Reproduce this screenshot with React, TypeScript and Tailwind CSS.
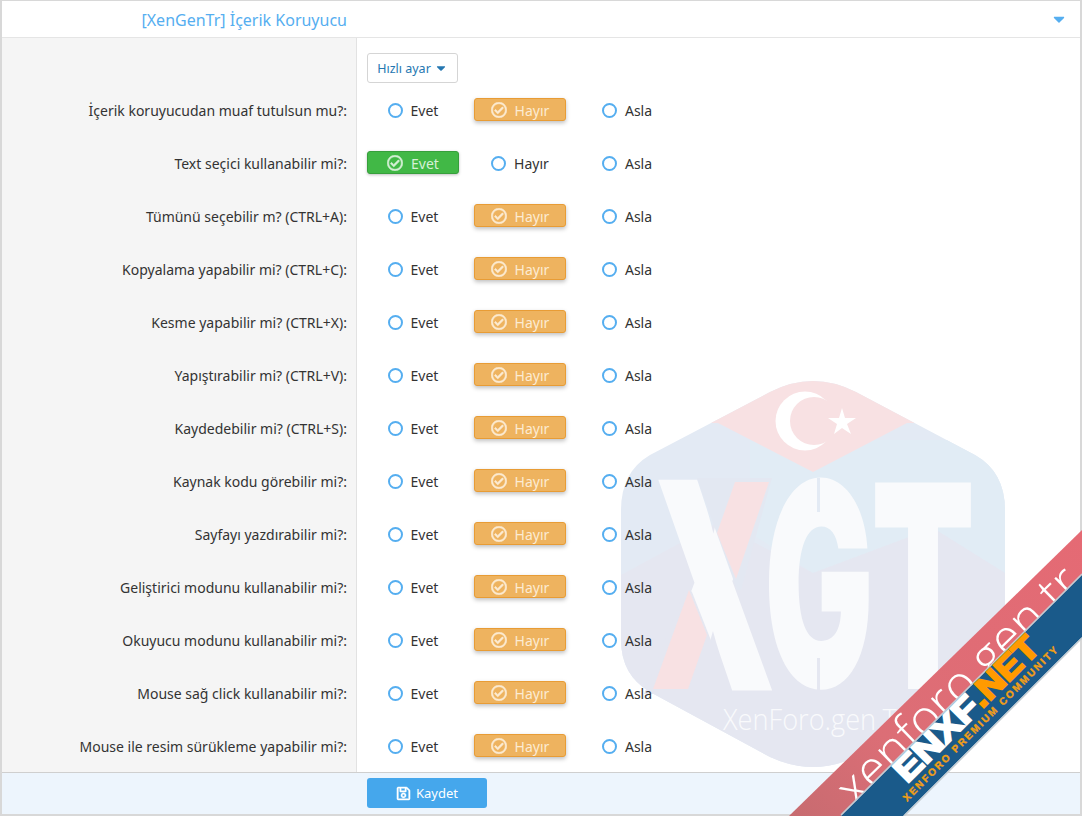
import React from "react";
import { FaCaretDown, FaRegCheckCircle, FaRegSave } from "react-icons/fa";

const rows: [string, "evet" | "hayir"][] = [
  ["İçerik koruyucudan muaf tutulsun mu?:", "hayir"],
  ["Text seçici kullanabilir mi?:", "evet"],
  ["Tümünü seçebilir m? (CTRL+A):", "hayir"],
  ["Kopyalama yapabilir mi? (CTRL+C):", "hayir"],
  ["Kesme yapabilir mi? (CTRL+X):", "hayir"],
  ["Yapıştırabilir mi? (CTRL+V):", "hayir"],
  ["Kaydedebilir mi? (CTRL+S):", "hayir"],
  ["Kaynak kodu görebilir mi?:", "hayir"],
  ["Sayfayı yazdırabilir mi?:", "hayir"],
  ["Geliştirici modunu kullanabilir mi?:", "hayir"],
  ["Okuyucu modunu kullanabilir mi?:", "hayir"],
  ["Mouse sağ click kullanabilir mi?:", "hayir"],
  ["Mouse ile resim sürükleme yapabilir mi?:", "hayir"],
];

function Option({ label, active }: { label: string; active?: "green" | "orange" }) {
  if (active) {
    return (
      <div
        className={
          active === "green"
            ? "flex h-[23px] w-[92px] items-center justify-center gap-[8px] rounded-[3px] border border-[#379f3c] bg-[#41b846] text-[#d5f0d6] shadow-[0_1px_3px_rgba(0,0,0,0.25)]"
            : "flex h-[23px] w-[92px] items-center justify-center gap-[8px] rounded-[3px] border border-[#e89c35] bg-[#eeb35f] text-[#fcebd2] shadow-[0_2px_4px_rgba(0,0,0,0.25)]"
        }
      >
        <FaRegCheckCircle className="h-[16px] w-[16px]" stroke="currentColor" strokeWidth={18} />
        <span className="pt-[2px]">{label}</span>
      </div>
    );
  }
  return (
    <div className="flex h-[23px] w-[92px] items-center justify-center gap-[8px] text-[#333333]">
      <span className="h-[15px] w-[15px] translate-y-[1px] rounded-full border-2 border-[#55aef0] bg-white/30" />
      <span className="pt-[2px]">{label}</span>
    </div>
  );
}

function Backdrop() {
  return (
    <svg className="pointer-events-none absolute left-0 top-0" width="1082" height="816" viewBox="0 0 1082 816">
      <defs>
        <clipPath id="hex">
          <path d="M770 392Q813 370 856 392L975 455Q1005 472 1005 510L1005 640Q1005 675 975 692L856 757Q813 777 770 757L650 692Q621 675 621 640L621 510Q621 472 650 455Z" />
        </clipPath>
      </defs>
      <g clipPath="url(#hex)">
        <rect x="600" y="360" width="430" height="430" fill="#e3eaf4" />
        <polygon points="750,533 813,573 933,528 1005,573 1005,440 750,440" fill="#e1ecf5" />
        <polygon points="621,575 717,523 813,573 933,528 1005,573 1005,790 621,790" fill="#e5e7f1" />
        <polygon points="813,340 940,423 907,423 813,472 718,423 690,423" fill="#f8e1e3" />
      </g>
      <circle cx="805" cy="421" r="29.5" fill="#ffffff" />
      <circle cx="814" cy="421" r="24" fill="#f8e1e3" />
      <polygon
        points="842,408 845,418 856,418 847,424 851,434 842,428 834,434 837,424 828,418 839,418"
        fill="#ffffff"
      />
      <g fill="#f9fafc" fontFamily="Inter, sans-serif" fontWeight="900">
        <text x="654" y="687" fontSize="280" textLength="118" lengthAdjust="spacingAndGlyphs" stroke="#f9fafc" strokeWidth="7">X</text>
        <text x="764" y="687" fontSize="284" textLength="110" lengthAdjust="spacingAndGlyphs">G</text>
        <text x="871" y="689" fontSize="284" textLength="104" lengthAdjust="spacingAndGlyphs">T</text>
      </g>
      <rect x="817" y="478" width="3" height="34" fill="#e3eaf4" />
      <rect x="817" y="658" width="3" height="34" fill="#e5e7f1" />
      <polygon points="697,478 772,478 741,590 737,590" fill="#e3e8f2" />
      <polygon points="692,592 732,694 644,694 686,586" fill="#e5e7f1" />
      <polygon points="735,482 769,482 736,579 717,533" fill="#f8e1e3" />
      <polygon points="689,590 707,635 688,689 653,689" fill="#f8e1e3" />
      <text x="723" y="730" fontSize="29" textLength="190" lengthAdjust="spacingAndGlyphs" fill="#f9fafc" fontFamily="'Open Sans', sans-serif" fontWeight="300">
        XenForo.gen.TR
      </text>
    </svg>
  );
}

function Ribbon() {
  return (
    <svg className="pointer-events-none absolute left-0 top-0" width="1082" height="816" viewBox="0 0 1082 816">
      <defs>
        <linearGradient id="red" x1="1082" y1="530" x2="790" y2="816" gradientUnits="userSpaceOnUse">
          <stop offset="0" stopColor="#e56a74" />
          <stop offset="0.7" stopColor="#dc6e76" />
          <stop offset="1" stopColor="#c76b70" />
        </linearGradient>
      </defs>
      <polygon points="1082,530 1082,575 841,816 789,816" fill="url(#red)" />
      <text
        transform="translate(856 809) rotate(-44.3)"
        fontSize="50"
        textLength="318"
        lengthAdjust="spacingAndGlyphs"
        fill="#ffffff"
        fontFamily="'Open Sans', sans-serif"
        fontWeight="300"
      >
        xenforo.gen.tr
      </text>
      <polygon points="1082,575 1082,637 903,816 841,816" fill="#1a5a8a" />
      <line x1="1082" y1="574" x2="841" y2="815" stroke="#c3ccd2" strokeWidth="1.5" />
      <line x1="1082" y1="638" x2="904" y2="816" stroke="#c3ccd2" strokeWidth="1.5" />
      <g transform="translate(907 784) rotate(-45)" fontFamily="'Liberation Sans', sans-serif" fontWeight="700">
        <text fontSize="33" stroke="#ffffff" strokeWidth="2.2" fill="#ffffff" textLength="106" lengthAdjust="spacingAndGlyphs">ENXF</text>
        <text x="106" fontSize="33" stroke="#ff9a00" strokeWidth="2.2" fill="#ff9a00" textLength="84" lengthAdjust="spacingAndGlyphs">.NET</text>
      </g>
      <text
        transform="translate(907 802) rotate(-45)"
        fontSize="10"
        fontWeight="700"
        stroke="#f29f16"
        strokeWidth="0.4"
        textLength="214"
        fill="#f29f16"
        fontFamily="'Liberation Sans', sans-serif"
      >
        XENFORO PREMIUM COMMUNITY
      </text>
    </svg>
  );
}

export default function App() {
  return (
    <div className="relative h-[816px] w-[1082px] overflow-hidden bg-white font-['Noto_Sans',sans-serif] text-[14px] text-[#333333]">
      <Backdrop />
      <div className="relative flex h-full flex-col border-x-2 border-b-2 border-t border-[#d8d8d8]">
        <header className="flex h-[37px] shrink-0 items-center border-b border-[#e5e5e5] bg-white pr-[12px]">
          <h1 className="w-[345px] pt-[2px] text-right text-[16px] font-normal text-[#55aef0]">[XenGenTr] İçerik Koruyucu</h1>
          <FaCaretDown className="ml-auto h-[18px] w-[18px] text-[#55aef0]" />
        </header>
        <div className="flex min-h-0 flex-1">
          <div className="flex w-[355px] shrink-0 flex-col gap-[30px] border-r border-[#e2e2e2] bg-[#f5f5f5] pb-[15px] pr-[9px] pt-[60px]">
            {rows.map(([label]) => (
              <div key={label} className="flex h-[23px] items-center justify-end pt-[2px] text-right">
                {label}
              </div>
            ))}
          </div>
          <div className="flex flex-1 flex-col gap-[30px] pl-[10px] pt-[15px]">
            <button className="-mb-[15px] flex h-[30px] w-[91px] items-center justify-center gap-[3px] rounded-[3px] border border-[#d5d5d5] bg-white pt-[2px] text-[12.5px] text-[#2577b1]">
              Hızlı ayar
              <FaCaretDown className="h-[14px] w-[14px] -translate-y-[1px]" />
            </button>
            {rows.map(([label, sel]) => (
              <div key={label} className="flex h-[23px] gap-[15px]">
                <Option label="Evet" active={sel === "evet" ? "green" : undefined} />
                <Option label="Hayır" active={sel === "hayir" ? "orange" : undefined} />
                <Option label="Asla" />
              </div>
            ))}
          </div>
        </div>
        <footer className="flex h-[42px] shrink-0 items-start border-t border-[#cfcfcf] bg-[#edf5fd] pl-[365px] pt-[5px]">
          <button className="flex h-[30px] w-[120px] items-center justify-center gap-[5px] rounded-[3px] bg-[#45a7ec] text-[13px] text-white">
            <FaRegSave className="h-[15px] w-[15px]" stroke="currentColor" strokeWidth={14} />
            <span className="pt-[2px]">Kaydet</span>
          </button>
        </footer>
      </div>
      <Ribbon />
    </div>
  );
}
